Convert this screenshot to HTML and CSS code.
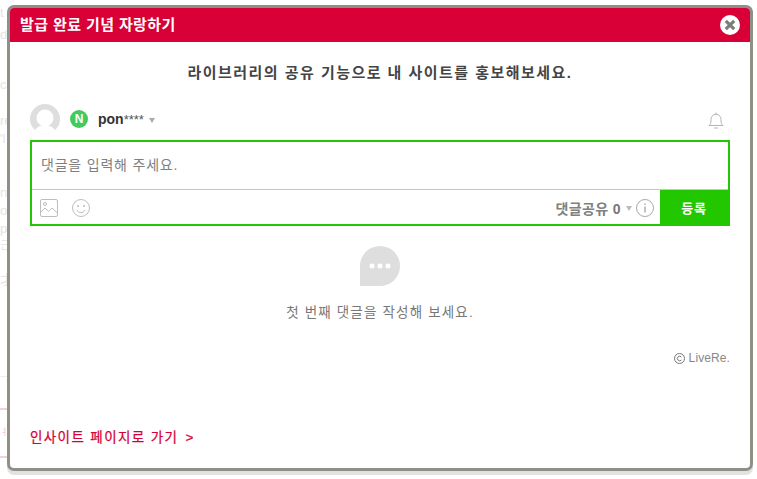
FILE: index.html
```html
<!DOCTYPE html>
<html lang="ko">
<head>
<meta charset="utf-8">
<title>발급 완료 기념 자랑하기</title>
<link rel="stylesheet" href="styles.css">
</head>
<body>
<div class="backdrop" aria-hidden="true">
  <span class="frag f1">t</span><span class="frag f2">d,</span><span class="frag f3">c</span><span class="frag f4">re</span><span class="frag f5">'l</span><span class="frag f6">nt</span><span class="frag f7">or</span><span class="frag f8">p</span><span class="frag f9">근</span><span class="frag f10">才</span>
  <span class="pinkline p1"></span><span class="pinkline p2"></span><span class="frag pinktext">ㅕ</span><span class="greyline"></span>
</div>
<main class="modal">
  <header class="modal-head">
    <h1 class="modal-title">발급 완료 기념 자랑하기</h1>
    <button class="close" aria-label="닫기">
      <svg width="20" height="20" viewBox="0 0 20 20"><circle cx="10" cy="10" r="10" fill="#fff"/><path d="M5.800 5.800 14.200 14.200M14.200 5.800 5.800 14.200" stroke="#7c7c78" stroke-width="3.200"/></svg>
    </button>
  </header>
  <div class="modal-body">
    <p class="lead">라이브러리의 공유 기능으로 내 사이트를 홍보해보세요.</p>
    <div class="user-row">
      <svg class="avatar" width="30" height="30" viewBox="0 0 30 30"><defs><clipPath id="ac"><circle cx="15" cy="15" r="15"/></clipPath></defs><circle cx="15" cy="15" r="15" fill="#dedede"/><g clip-path="url(#ac)"><circle cx="15" cy="14" r="8.500" fill="#fff"/><path d="M3 32C4 24 10 21 15 21s11 3 12 11z" fill="#fff"/></g></svg>
      <span class="naver">N</span>
      <span class="uname">pon<span class="stars">****</span></span>
      <span class="caret"></span>
      <svg class="bell" width="16" height="18" viewBox="0 0 16 18" fill="none" stroke="#b4b4b4" stroke-width="1"><path d="M1 13.500h14c-1.500-1.300-2-2.500-2-4.500V7.500C13 4.500 11 2.300 8 2.300S3 4.500 3 7.500V9c0 2-.5 3.200-2 4.500z"/><path d="M8 .5v1.800M6 16h4"/></svg>
    </div>
    <section class="editor">
      <div class="input">댓글을 입력해 주세요.</div>
      <div class="toolbar">
        <svg class="ico" width="18" height="18" viewBox="0 0 18 18" fill="none" stroke="#bdbdbd"><rect x=".5" y=".5" width="17" height="17" rx="1.500"/><circle cx="5" cy="5" r="1.500"/><path d="M.5 13.500 5 9l3.500 3.500L12 9l5.500 5"/></svg>
        <svg class="ico smile" width="18" height="18" viewBox="0 0 18 18" fill="none" stroke="#bdbdbd"><circle cx="9" cy="9" r="8.500"/><circle cx="6" cy="7" r=".6" fill="#bdbdbd"/><circle cx="12" cy="7" r=".6" fill="#bdbdbd"/><path d="M5 11c1 2 2.500 2.700 4 2.700s3-.7 4-2.700"/></svg>
        <span class="share">댓글공유 <b class="count">0</b></span>
        <span class="caret small"></span>
        <svg class="info" width="18" height="18" viewBox="0 0 18 18" fill="none" stroke="#a8a8a8"><circle cx="9" cy="9" r="8.500"/><path d="M9 7.500v6M9 4.500v1.500" stroke="#9a9a9a" stroke-width="1.200"/></svg>
        <button class="submit">등록</button>
      </div>
    </section>
    <div class="empty">
      <svg width="40" height="40" viewBox="0 0 40 40"><path d="M20 0a20 20 0 0 1 0 40H0V20A20 20 0 0 1 20 0z" fill="#dedede"/><circle cx="12" cy="20" r="2.500" fill="#fff"/><circle cx="20" cy="20" r="2.500" fill="#fff"/><circle cx="28" cy="20" r="2.500" fill="#fff"/></svg>
      <p class="empty-text">첫 번째 댓글을 작성해 보세요.</p>
    </div>
    <div class="brand">
      <svg class="copy" width="11" height="11" viewBox="0 0 11 11" fill="none" stroke="#777"><circle cx="5.500" cy="5.500" r="5"/><path d="M7.400 4a2.300 2.300 0 1 0 0 3"/></svg>
      LiveRe.
    </div>
    <a class="insight" href="#">인사이트 페이지로 가기 <span class="gt">&gt;</span></a>
  </div>
</main>
</body>
</html>
```

FILE: styles.css
```css
* { box-sizing: border-box; }
html, body { margin: 0; height: 100%; }
body {
  width: 757px; height: 479px; overflow: hidden; background: #fff;
  padding: 5px 0 0 7px; position: relative;
  font-family: "Liberation Sans", "Noto Sans CJK KR", sans-serif;
}
.backdrop { position: absolute; inset: 0; }
.frag { position: absolute; left: 0; font-size: 13px; color: #e4e4e4; line-height: 14px; }
.f1 { top: 6px; } .f2 { top: 28px; } .f3 { top: 78px; } .f4 { top: 114px; } .f5 { top: 132px; }
.f6 { top: 186px; } .f7 { top: 204px; } .f8 { top: 222px; } .f9 { top: 238px; font-size: 11px; } .f10 { top: 273px; }
.pinkline { position: absolute; left: 0; width: 7px; height: 2px; background: #f8cfd9; }
.p1 { top: 408px; } .p2 { top: 456px; }
.pinktext { top: 425px; left: 0; width: 7px; font-size: 9px; color: #f4c2cf; }
.greyline { position: absolute; left: 0; top: 376px; width: 7px; height: 1px; background: #f0f0f0; }

.modal {
  position: relative; width: 746px; height: 466px;
  border: 3px solid #8f8f88; border-radius: 7px; background: #fff;
  box-shadow: 0 4px 0 #e2e2e2; display: flex; flex-direction: column; overflow: hidden;
}
.modal-head {
  height: 34px; flex: none; background: #d80036; display: flex; align-items: center;
  justify-content: space-between; padding: 0 10px 0 10px;
}
.modal-title { margin: 0; font-size: 15px; font-weight: 700; color: #fff; line-height: 20px; letter-spacing: .4px; }
.close { width: 20px; height: 20px; padding: 0; border: 0; background: none; display: block; }
.close svg { display: block; }
.modal-body { flex: 1; padding: 0 20px; display: flex; flex-direction: column; min-height: 0; }
.lead { margin: 20px 0 0; text-align: center; font-size: 15px; font-weight: 700; color: #444; line-height: 22px; letter-spacing: 1.470px; }
.user-row { display: flex; align-items: center; height: 30px; margin-top: 20px; }
.avatar { flex: none; }
.naver {
  width: 18px; height: 18px; margin-left: 10px; border-radius: 50%; background: #3fcc5c; color: #fff;
  font-size: 12px; font-weight: 700; text-align: center; line-height: 18px;
}
.uname { margin-left: 10px; font-size: 14px; font-weight: 700; color: #333; }
.stars { font-size: 13px; font-weight: 400; color: #555; }
.caret { width: 0; height: 0; margin: 2px 0 0 5px; border: 3px solid transparent; border-top: 5px solid #aaa; border-bottom: 0; }
.bell { margin-left: auto; margin-right: 6px; margin-top: 3px; }
.editor { margin-top: 6px; height: 86px; border: 2px solid #22c700; display: flex; flex-direction: column; }
.input { height: 48px; flex: none; padding: 13px 9px 0; font-size: 14px; line-height: 20px; color: #808080; border-bottom: 1px solid #c4c4c4; letter-spacing: .8px; }
.toolbar { flex: 1; display: flex; align-items: center; padding-left: 8px; }
.ico { flex: none; }
.smile { margin-left: 14px; }
.share { margin-left: auto; font-size: 14px; font-weight: 700; color: #808080; margin-top: 1px; letter-spacing: .4px; }
.count { font-size: 14px; color: #777; }
.caret.small { margin: 2px 0 0 5px; border-top-color: #bbb; }
.info { margin-left: 4px; margin-right: 6px; }
.submit {
  width: 68px; height: 35px; border: 0; padding: 0; background: #22c700; color: #fff;
  font: 700 13px "Liberation Sans", "Noto Sans CJK KR", sans-serif; letter-spacing: .8px;
}
.empty { display: flex; flex-direction: column; align-items: center; margin-top: 20px; }
.empty svg { display: block; }
.empty-text { margin: 17px 0 0; font-size: 13.500px; line-height: 20px; color: #777; letter-spacing: 1.170px; }
.brand { margin-top: 27px; display: flex; justify-content: flex-end; align-items: center; gap: 4px; font-size: 12px; line-height: 16px; color: #888; letter-spacing: .1px; }
.copy { flex: none; }
.insight { margin-top: 62px; font-size: 13.500px; font-weight: 400; -webkit-text-stroke: .25px #d80036; line-height: 20px; color: #d80036; text-decoration: none; letter-spacing: 1.380px; }
.gt { margin-left: 2px; }
```
